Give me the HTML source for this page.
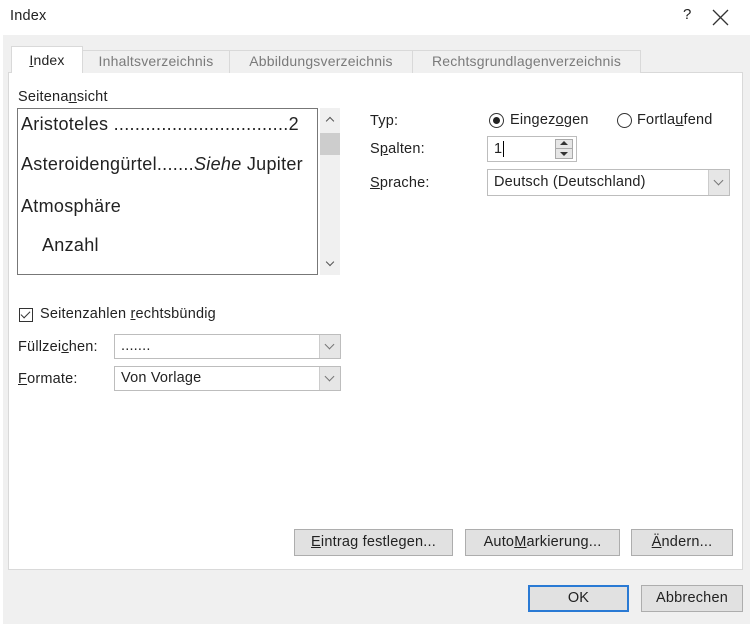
<!DOCTYPE html>
<html><head><meta charset="utf-8">
<style>
*{box-sizing:border-box;margin:0;padding:0}
body{width:750px;height:624px;background:#fff;font-family:"Liberation Sans",sans-serif;font-size:14.5px;letter-spacing:0.2px;color:#222;position:relative;overflow:hidden}
.a{position:absolute;white-space:nowrap}
.gray{left:3px;top:35px;width:747px;height:589px;background:#f0f0f0}
.tab{top:50px;height:23px;border:1px solid #d9d9d9;border-bottom:none;background:#f0f0f0;color:#7a7a7a;text-align:center;line-height:21px;font-size:14px}
.panel{left:8px;top:72px;width:735px;height:498px;background:#fff;border:1px solid #d9d9d9}
.combo{height:25px;border:1px solid #bdbdbd;background:#fff;line-height:23px;padding-left:6px}
.combo .dd{position:absolute;right:0;top:0;width:21px;height:23px;background:#e6e6e6;border-left:1px solid #ccc}
.chev{position:absolute;left:6px;top:6px;width:7px;height:7px;border-right:1px solid #777;border-bottom:1px solid #777;transform:rotate(45deg)}
.btn{height:27px;border:1px solid #adadad;background:#e1e1e1;text-align:center;line-height:25px;font-size:14.5px}
u{text-decoration:underline}
.list{font-size:18px;letter-spacing:0.3px}
</style></head><body>
<div class="a" style="left:10px;top:8px;font-size:14.5px">Index</div>
<div class="a" style="left:683px;top:6px;font-size:15px">?</div>
<svg class="a" style="left:712px;top:9px" width="17" height="17"><path d="M1 1L16 16M16 1L1 16" stroke="#333" stroke-width="1.3"/></svg>
<div class="a gray"></div>
<div class="a panel"></div>
<div class="a tab" style="left:82px;width:148px">Inhaltsverzeichnis</div>
<div class="a tab" style="left:229px;width:184px">Abbildungsverzeichnis</div>
<div class="a tab" style="left:412px;width:229px">Rechtsgrundlagenverzeichnis</div>
<div class="a tab" style="left:11px;top:46px;height:27px;width:72px;background:#fff;color:#222;line-height:27px"><u>I</u>ndex</div>

<div class="a" style="left:18px;top:89px">Seitena<u>n</u>sicht</div>
<div class="a list" style="left:17px;top:108px;width:301px;height:167px;border:1px solid #777;background:#fff;color:#222">
 <div class="a" style="left:3px;top:5px">Aristoteles .................................2</div>
 <div class="a" style="left:3px;top:45px">Asteroidengürtel.......<i>Siehe</i> Jupiter</div>
 <div class="a" style="left:3px;top:87px">Atmosphäre</div>
 <div class="a" style="left:24px;top:126px">Anzahl</div>
</div>
<div class="a" style="left:320px;top:108px;width:20px;height:167px;background:#f0f0f0"></div>
<div class="a" style="left:320px;top:133px;width:20px;height:22px;background:#cdcdcd"></div>
<div class="a" style="left:327px;top:118px;width:6px;height:6px;border-left:1.5px solid #555;border-top:1.5px solid #555;transform:rotate(45deg)"></div>
<div class="a" style="left:327px;top:259px;width:6px;height:6px;border-right:1.5px solid #555;border-bottom:1.5px solid #555;transform:rotate(45deg)"></div>

<div class="a" style="left:19px;top:308px;width:14px;height:14px;border:1px solid #333;background:#fff"></div>
<div class="a" style="left:23px;top:309px;width:5px;height:9px;border-right:1.5px solid #333;border-bottom:1.5px solid #333;transform:rotate(45deg)"></div>
<div class="a" style="left:40px;top:306px">Seitenzahlen <u>r</u>echtsbündig</div>
<div class="a" style="left:18px;top:339px">Füllzei<u>c</u>hen:</div>
<div class="a combo" style="left:114px;top:334px;width:227px">.......<div class="dd"><div class="chev"></div></div></div>
<div class="a" style="left:18px;top:371px"><u>F</u>ormate:</div>
<div class="a combo" style="left:114px;top:366px;width:227px">Von Vorlage<div class="dd"><div class="chev"></div></div></div>

<div class="a" style="left:370px;top:113px">Typ:</div>
<div class="a" style="left:489px;top:113px;width:15px;height:15px;border:1px solid #333;border-radius:50%;background:#fff"></div>
<div class="a" style="left:493px;top:117px;width:7px;height:7px;border-radius:50%;background:#222"></div>
<div class="a" style="left:510px;top:112px">Eingez<u>o</u>gen</div>
<div class="a" style="left:617px;top:113px;width:15px;height:15px;border:1px solid #333;border-radius:50%;background:#fff"></div>
<div class="a" style="left:637px;top:112px">Fortla<u>u</u>fend</div>
<div class="a" style="left:370px;top:141px">S<u>p</u>alten:</div>
<div class="a" style="left:487px;top:136px;width:90px;height:26px;border:1px solid #bdbdbd;background:#fff;padding-left:6px;line-height:24px">1<span style="border-left:1px solid #000;margin-left:1px"></span></div>
<div class="a" style="left:555px;top:139px;width:18px;height:20px;border:1px solid #aaa;background:#e6e6e6"></div>
<div class="a" style="left:555px;top:148px;width:18px;height:1px;background:#aaa"></div>
<div class="a" style="left:560px;top:141px;width:0;height:0;border-left:4px solid transparent;border-right:4px solid transparent;border-bottom:4px solid #333"></div>
<div class="a" style="left:560px;top:152px;width:0;height:0;border-left:4px solid transparent;border-right:4px solid transparent;border-top:4px solid #333"></div>
<div class="a" style="left:370px;top:175px"><u>S</u>prache:</div>
<div class="a combo" style="left:487px;top:169px;width:243px;height:27px;line-height:25px">Deutsch (Deutschland)<div class="dd" style="height:25px"><div class="chev" style="top:7px"></div></div></div>

<div class="a btn" style="left:294px;top:529px;width:159px"><u>E</u>intrag festlegen...</div>
<div class="a btn" style="left:465px;top:529px;width:155px">Auto<u>M</u>arkierung...</div>
<div class="a btn" style="left:631px;top:529px;width:102px"><u>Ä</u>ndern...</div>
<div class="a btn" style="left:528px;top:585px;width:101px;border:2px solid #2a7ad4;line-height:23px">OK</div>
<div class="a btn" style="left:641px;top:585px;width:102px">Abbrechen</div>
</body></html>
